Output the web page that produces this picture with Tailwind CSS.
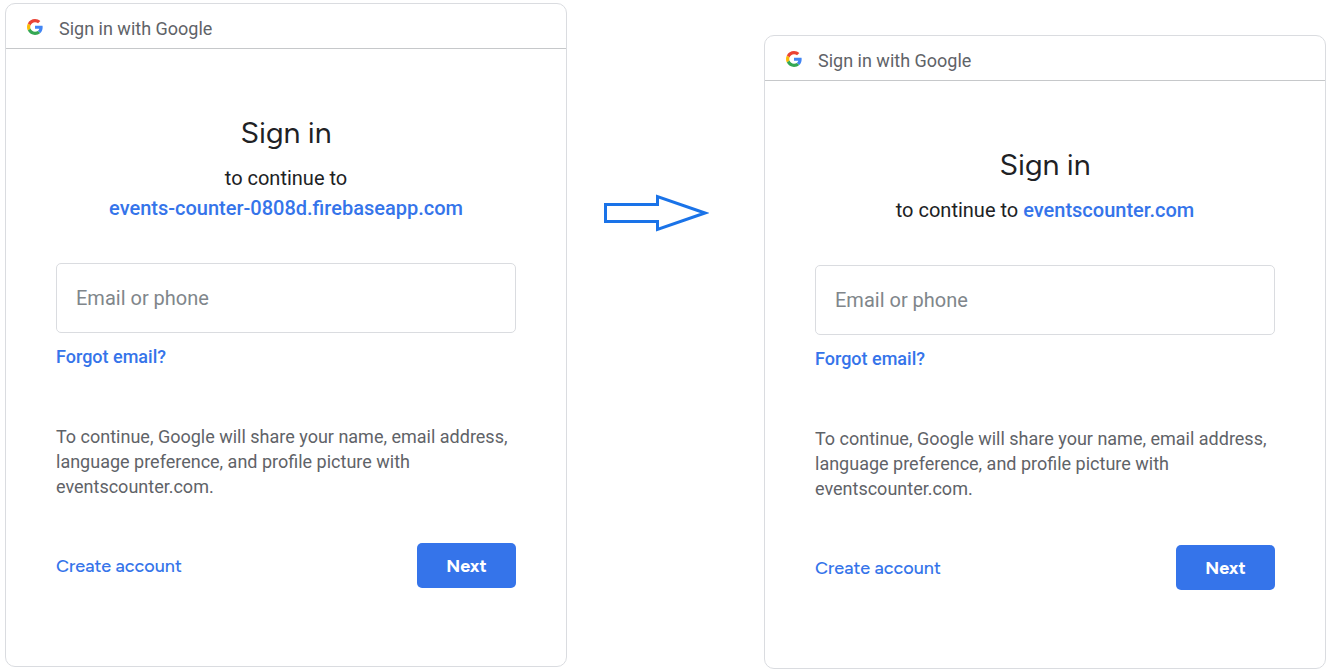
<!DOCTYPE html>
<html lang="en">
<head>
<meta charset="utf-8">
<meta name="viewport" content="width=device-width, initial-scale=1">
<title>Sign in with Google</title>
<script src="https://cdn.jsdelivr.net/npm/@tailwindcss/browser@4"></script>
</head>
<body class="bg-white font-['Roboto','Liberation_Sans',sans-serif] text-[#202124]">
<svg class="hidden" aria-hidden="true">
  <symbol id="google" viewBox="0 0 48 48">
    <path fill="#EA4335" d="M24 9.5c3.54 0 6.71 1.22 9.21 3.6l6.85-6.85C35.9 2.38 30.47 0 24 0 14.62 0 6.51 5.38 2.56 13.22l7.98 6.19C12.43 13.72 17.74 9.5 24 9.5z"/>
    <path fill="#4285F4" d="M46.98 24.55c0-1.57-.15-3.09-.38-4.55H24v9.02h12.94c-.58 2.96-2.26 5.48-4.78 7.18l7.73 6c4.51-4.18 7.09-10.36 7.09-17.65z"/>
    <path fill="#FBBC05" d="M10.53 28.59c-.48-1.45-.76-2.99-.76-4.59s.27-3.14.76-4.59l-7.98-6.19C.92 16.46 0 20.12 0 24c0 3.88.92 7.54 2.56 10.78l7.97-6.19z"/>
    <path fill="#34A853" d="M24 48c6.48 0 11.93-2.13 15.89-5.81l-7.73-6c-2.15 1.45-4.92 2.3-8.16 2.3-6.26 0-11.57-4.22-13.47-9.91l-7.98 6.19C6.51 42.62 14.62 48 24 48z"/>
  </symbol>
</svg>
<main class="flex items-start justify-between pt-[3px] pr-[9px] pl-[5px]">
  <section class="min-w-0 max-w-[562px] flex-1 rounded-[10px] border border-[#dadce0]">
    <header class="flex items-center gap-4 border-b border-[#c6c8ca] pt-[6px] pl-[21px]">
      <svg class="mb-1 size-4" aria-hidden="true"><use href="#google"/></svg>
      <p class="text-lg leading-[38px] text-[#5f6368]">Sign in with Google</p>
    </header>
    <form class="px-[50px] pt-16 pb-[78px]">
      <h1 class="text-center font-['Figtree','Lato',sans-serif] text-[30px] leading-10">Sign in</h1>
      <p class="mt-[10px] text-center text-xl leading-[30px]">to continue to<br><a href="#" class="font-medium text-[#3574ea]">events-counter-0808d.firebaseapp.com</a></p>
      <input type="text" aria-label="Email or phone" placeholder="Email or phone" class="mt-10 block h-[70px] w-full rounded-[5px] border border-[#dadce0] px-[19px] text-xl placeholder:text-[#80868b]">
      <a href="#" class="mt-[14px] block text-lg leading-5 font-medium text-[#3574ea]">Forgot email?</a>
      <p class="mt-[57px] text-lg leading-[25px] text-[#5f6368]">To continue, Google will share your name, email address, language preference, and profile picture with eventscounter.com.</p>
      <div class="mt-[44px] flex items-center justify-between font-['Figtree','Lato',sans-serif] text-lg">
        <a href="#" class="font-medium text-[#3574ea]">Create account</a>
        <button type="button" class="h-[45px] w-[99px] rounded-[5px] bg-[#3574ea] font-bold text-white">Next</button>
      </div>
    </form>
  </section>
  <svg class="mt-[190px] mr-5 h-[40px] w-[106px] shrink-0" viewBox="0 0 106 40" fill="none" stroke="#1a73e8" stroke-width="3" aria-hidden="true"><path d="M2.500 11.500H54.500V3.500L102 20L54.500 36.500V28.500H2.500Z"/></svg>
  <section class="mt-8 min-w-0 max-w-[562px] flex-1 rounded-[10px] border border-[#dadce0]">
    <header class="flex items-center gap-4 border-b border-[#c6c8ca] pt-[6px] pl-[21px]">
      <svg class="mb-1 size-4" aria-hidden="true"><use href="#google"/></svg>
      <p class="text-lg leading-[38px] text-[#5f6368]">Sign in with Google</p>
    </header>
    <form class="px-[50px] pt-16 pb-[78px]">
      <h1 class="text-center font-['Figtree','Lato',sans-serif] text-[30px] leading-10">Sign in</h1>
      <p class="mt-[10px] text-center text-xl leading-[30px]">to continue to <a href="#" class="font-medium text-[#3574ea]">eventscounter.com</a></p>
      <input type="text" aria-label="Email or phone" placeholder="Email or phone" class="mt-10 block h-[70px] w-full rounded-[5px] border border-[#dadce0] px-[19px] text-xl placeholder:text-[#80868b]">
      <a href="#" class="mt-[14px] block text-lg leading-5 font-medium text-[#3574ea]">Forgot email?</a>
      <p class="mt-[57px] text-lg leading-[25px] text-[#5f6368]">To continue, Google will share your name, email address, language preference, and profile picture with eventscounter.com.</p>
      <div class="mt-[44px] flex items-center justify-between font-['Figtree','Lato',sans-serif] text-lg">
        <a href="#" class="font-medium text-[#3574ea]">Create account</a>
        <button type="button" class="h-[45px] w-[99px] rounded-[5px] bg-[#3574ea] font-bold text-white">Next</button>
      </div>
    </form>
  </section>
</main>
</body>
</html>
